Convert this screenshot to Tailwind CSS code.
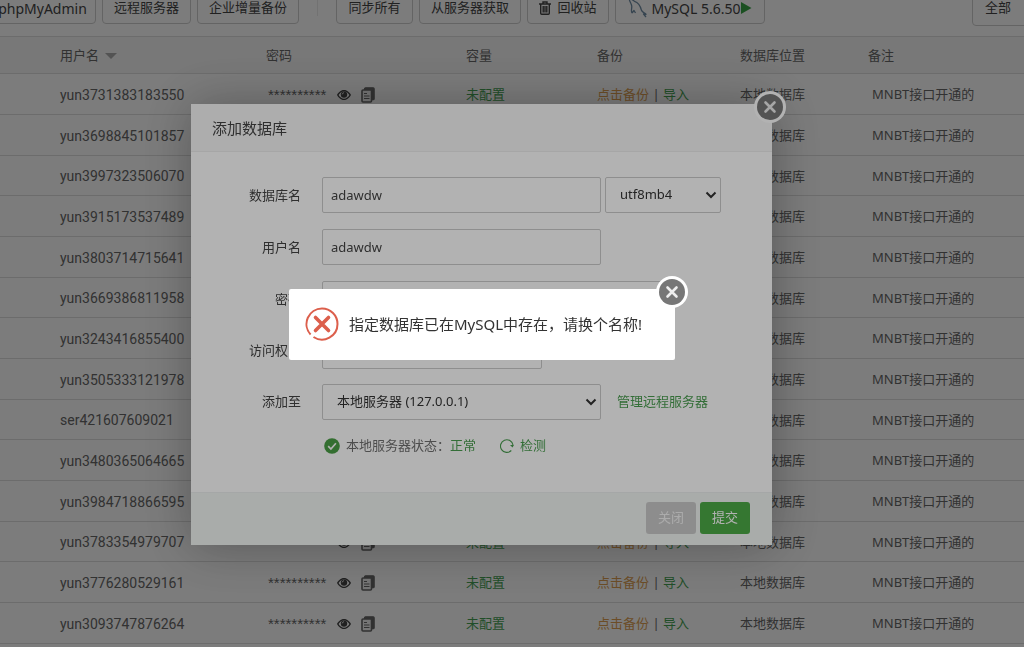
<!DOCTYPE html>
<html lang="zh-CN">
<head>
<meta charset="utf-8">
<title>添加数据库</title>
<script src="https://cdn.jsdelivr.net/npm/@tailwindcss/browser@4"></script>
</head>
<body class="h-screen overflow-hidden bg-[#fdfdfd] font-['Noto_Sans','Noto_Sans_CJK_SC',sans-serif] text-[13px] text-[#666]">
<svg class="hidden">
  <symbol id="close" viewBox="0 0 34 34">
    <circle cx="17" cy="17" r="16" fill="#fff"/>
    <circle cx="17" cy="17" r="13" fill="#777"/>
    <path d="M12.500 12.500l9 9M21.500 12.500L12.500 21.500" stroke="#eee" stroke-width="2.600" stroke-linecap="round"/>
  </symbol>
  <symbol id="eye" viewBox="0 0 14 12">
    <path fill-rule="evenodd" d="M7 1C3.600 1 1.200 3.700 0 6c1.200 2.300 3.600 5 7 5s5.800-2.700 7-5C12.800 3.700 10.400 1 7 1zM7 2.400c2.300 0 4.300 1.600 5.400 3.600C11.300 8 9.300 9.700 7 9.700S2.700 8 1.600 6C2.700 4 4.700 2.400 7 2.400z"/>
    <circle cx="7" cy="5.600" r="3.200"/>
    <path d="M5.200 5.400A1.900 1.900 0 0 1 7 3.700" fill="none" stroke="#fff" stroke-width=".8"/>
  </symbol>
  <symbol id="copy" viewBox="0 0 14 16">
    <path d="M3.500 2.500V1.800a1 1 0 0 1 1-1h7.700a1 1 0 0 1 1 1v10a1 1 0 0 1-1 1h-1.200V4.500a2 2 0 0 0-2-2z" fill="currentColor" stroke="currentColor" stroke-width="1.100"/>
    <rect x="1" y="3" width="9.500" height="12" rx="1" fill="#eee" stroke="currentColor" stroke-width="1.600"/>
    <path d="M3 6.500h3M3 9h5.500M3 11.500h5.500" stroke="currentColor" stroke-width="1.200"/>
  </symbol>
  <symbol id="chevron" viewBox="0 0 12 8">
    <path d="M1.500 1.500L6 6l4.500-4.500" fill="none" stroke="currentColor" stroke-width="2"/>
  </symbol>
</svg>

<header class="flex h-9 items-end gap-1.5 overflow-hidden pb-3 text-[#444] *:shrink-0">
  <button class="-ml-[11px] h-8 w-[107px] rounded border border-[#ccc] text-[14px]">phpMyAdmin</button>
  <button class="h-8 w-[89px] rounded border border-[#ccc]">远程服务器</button>
  <button class="h-8 w-[102px] rounded border border-[#ccc]">企业增量备份</button>
  <span class="mx-3 mb-2 h-6 w-px bg-[#e8e8e8]"></span>
  <button class="h-8 w-[77px] rounded border border-[#ccc]">同步所有</button>
  <button class="h-8 w-[102px] rounded border border-[#ccc]">从服务器获取</button>
  <button class="flex h-8 w-[82px] items-center justify-center gap-1.5 rounded border border-[#ccc]">
    <svg class="h-3.5 w-3" viewBox="0 0 12 14" fill="none" stroke="currentColor" stroke-width="1.400"><path d="M0 3h12M4 3V1h4v2M1.700 3v9.300c0 .6.400 1 1 1h6.600c.6 0 1-.4 1-1V3M4.200 5v6.500M6 5v6.500M7.800 5v6.500"/></svg>
    回收站
  </button>
  <button class="flex h-8 w-[150px] items-center justify-center rounded border border-[#ccc] text-[14px]">
    <svg class="mr-1 h-5 w-5" viewBox="0 0 20 20" fill="none" stroke="#6f8ca3" stroke-width="1.300" stroke-linejoin="round"><path d="M4 15c-1.500-3 .5-5-.5-8C2.500 4 1 2.500 1.500 1.300 3 .5 5 2 6.500 3.300c4 1.200 6 5 7 9 .6 2 3 2.500 4.500 4l-2.500-.3 2.500 3M4 15l2-2.500 1.500 2.500"/></svg>
    MySQL 5.6.50
    <svg class="h-3 w-3" viewBox="0 0 12 12" fill="#38a344"><path d="M1 0l10.500 6L1 12z"/></svg>
  </button>
  <button class="-mb-0.5 ml-auto -mr-1 h-9 w-14 rounded-l border border-[#ccc] pr-1 text-center">全部</button>
</header>

<table class="w-full table-fixed border-separate border-spacing-0 text-left">
  <colgroup><col class="w-[60px]"><col class="w-[206px]"><col class="w-[200px]"><col class="w-[131px]"><col class="w-[143px]"><col class="w-[128px]"><col></colgroup>
  <thead>
    <tr class="h-[38px] bg-[#f4f4f4] *:border-y *:border-[#ddd] *:p-0 *:pt-0.5 *:font-normal">
      <th></th>
      <th><span class="flex items-center gap-1.5">用户名 <svg class="h-1.5 w-3" viewBox="0 0 12 6" fill="#aaa"><path d="M0 0h12L6 6z"/></svg></span></th>
      <th>密码</th><th>容量</th><th>备份</th><th>数据库位置</th><th>备注</th>
    </tr>
  </thead>
  <tbody id="rows"></tbody>
</table>
<template id="row">
  <tr class="h-[41px] *:border-b *:border-[#ddd] *:p-0 *:pt-0.5 nth-[3n]:h-10">
    <td></td>
    <td class="font-['Roboto',sans-serif] text-[14px]"></td>
    <td><span class="flex items-center pl-0.5"><span class="w-[69px] font-['Liberation_Sans',sans-serif] text-[15px] leading-4">**********</span>
      <button aria-label="显示密码" class="mr-2.5 text-[#444]"><svg class="h-3 w-3.5" fill="currentColor"><use href="#eye"/></svg></button>
      <button aria-label="复制密码" class="text-[#666]"><svg class="h-4 w-3.5"><use href="#copy"/></svg></button></span></td>
    <td><a href="#" class="text-[#45a053]">未配置</a></td>
    <td><a href="#" class="text-[#dc9e50]">点击备份</a> | <a href="#" class="text-[#45a053]">导入</a></td>
    <td>本地数据库</td>
    <td class="pl-1!">MNBT接口开通的</td>
  </tr>
</template>

<div class="fixed inset-0 flex items-center justify-center bg-black/30 pt-0.5 pr-[61px]">
  <section role="dialog" aria-label="添加数据库" class="relative w-[581px] rounded-xs bg-white text-[#444] shadow-[1px_1px_50px_rgba(0,0,0,0.3)]">
    <h2 class="h-12 border-b border-[#eee] bg-[#f8f8f8] pl-[21px] text-[15px] leading-[48px]">添加数据库</h2>
    <button aria-label="关闭窗口" class="absolute -top-3.5 -right-[15px]"><svg class="size-[34px]"><use href="#close"/></svg></button>
    <form class="pt-[25px]">
      <div class="mb-4 flex h-9 items-center">
        <label for="db" class="mr-[21px] w-[110px] pt-0.5 text-right">数据库名</label>
        <input id="db" value="adawdw" class="h-9 w-[279px] rounded-xs border border-[#ccc] px-2">
        <span class="relative ml-1 text-[#333]">
          <select aria-label="字符集" class="h-9 w-[116px] appearance-none rounded-xs border border-[#ccc] bg-white pl-3.5"><option>utf8mb4</option></select>
          <svg class="pointer-events-none absolute top-3.5 right-1 h-2 w-3"><use href="#chevron"/></svg>
        </span>
      </div>
      <div class="mb-4 flex h-9 items-center">
        <label for="user" class="mr-[21px] w-[110px] pt-0.5 text-right">用户名</label>
        <input id="user" value="adawdw" class="h-9 w-[279px] rounded-xs border border-[#ccc] px-2">
      </div>
      <div class="mb-4 flex h-9 items-center">
        <label for="pw" class="mr-[21px] w-[110px] pt-0.5 text-right">密码</label>
        <input id="pw" class="h-9 w-[345px] rounded-xs border border-[#ccc] px-2">
      </div>
      <div class="mb-[15px] flex h-9 items-center">
        <label for="access" class="mr-[21px] w-[110px] text-right">访问权限</label>
        <select id="access" class="h-9 w-[220px] appearance-none rounded-xs border border-[#ccc] bg-white pl-3.5"><option></option></select>
      </div>
      <div class="flex h-9 items-center">
        <label for="server" class="mr-[21px] w-[110px] text-right">添加至</label>
        <span class="relative text-[#333]">
          <select id="server" class="h-9 w-[279px] appearance-none rounded-xs border border-[#ccc] bg-white pl-3.5"><option>本地服务器 (127.0.0.1)</option></select>
          <svg class="pointer-events-none absolute top-3.5 right-1 h-2 w-3"><use href="#chevron"/></svg>
        </span>
        <a href="#" class="ml-4 text-[#4a9e50]">管理远程服务器</a>
      </div>
      <p class="mt-4 flex h-5 items-center pl-[133px] text-[#707070]">
        <svg class="mr-1.5 size-4" viewBox="0 0 16 16"><circle cx="8" cy="8" r="7.800" fill="#4a9e45"/><path d="M4.200 8.200l2.700 2.800 5-5.800" fill="none" stroke="#fff" stroke-width="1.700"/></svg>
        本地服务器状态：<span class="text-[#4a9e50]">正常</span>
        <a href="#" class="ml-6 flex items-center gap-1.5 text-[#4a9e50]"><svg class="size-3.5" viewBox="0 0 14 14" fill="none" stroke="currentColor" stroke-width="1.100"><path d="M11.300 11.500A6.300 6.300 0 1 1 13 6"/><path d="M10 6h4l-1.500 2.500z" fill="currentColor" stroke="none"/></svg>检测</a>
      </p>
      <div class="mt-9 flex h-[53px] items-center justify-end gap-1 border-t border-[#edf0ef] bg-[#f2f6f4] pr-[22px] pb-[3px]">
        <button type="button" class="h-8 w-[50px] rounded-[3px] bg-[#cbcbcb] text-white/80">关闭</button>
        <button class="h-8 w-[50px] rounded-[3px] bg-[#4dab47] text-white">提交</button>
      </div>
    </form>
  </section>
</div>

<div class="fixed inset-0 flex items-center justify-center bg-black/30 pt-0.5 pr-[60px]">
  <section role="alertdialog" aria-label="错误" class="relative flex h-[71px] w-[386px] items-center rounded-xs bg-white pl-4 text-[15px] text-[#333]">
    <svg class="mr-2.5 mb-0.5 size-[34px]" viewBox="0 0 34 34" fill="none" stroke="#dc5f4c"><path d="M5.600 27.500A15.500 15.500 0 0 1 17 1.500 15.500 15.500 0 0 1 32.500 17a15.500 15.500 0 0 1-24 13" stroke-width="2"/><path d="M10.500 10.500l13 13M23.500 10.500L10.500 23.500" stroke-width="3.600" stroke-linecap="round"/></svg>
    <p>指定数据库已在MySQL中存在，请换个名称!</p>
    <button aria-label="关闭提示" class="absolute -top-3.5 -right-3.5"><svg class="size-[34px]"><use href="#close"/></svg></button>
  </section>
</div>

<script>
const users = ['yun3731383183550','yun3698845101857','yun3997323506070','yun3915173537489','yun3803714715641','yun3669386811958','yun3243416855400','yun3505333121978','ser421607609021','yun3480365064665','yun3984718866595','yun3783354979707','yun3776280529161','yun3093747876264'];
const body = document.getElementById('rows'), row = document.getElementById('row');
for (const u of users) {
  const r = row.content.cloneNode(true);
  r.querySelectorAll('td')[1].textContent = u;
  body.append(r);
}
</script>
</body>
</html>
